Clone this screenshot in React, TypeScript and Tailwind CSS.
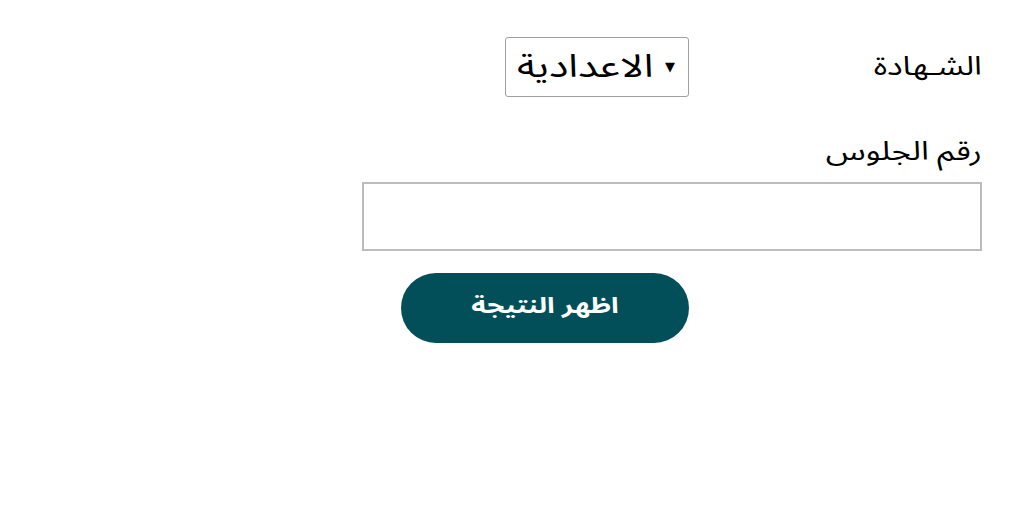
import React, { useState } from 'react';

const options = ['الاعدادية', 'الثانوية'];

export default function App() {
  const [cert, setCert] = useState(options[0]);

  return (
    <div dir="rtl" className="min-h-[517px] w-full bg-white pr-[42px] pt-[37px] font-['Noto_Sans_Arabic','DejaVu_Sans',sans-serif] text-black">
      <form className="w-[620px]" onSubmit={(e) => e.preventDefault()}>
        <div className="flex items-center">
          <label className="w-[293px] text-[26px] leading-none">
            <span className="inline-block origin-right scale-x-[1.26]">الشـهادة</span>
          </label>
          <div className="relative flex h-[60px] w-[184px] items-center rounded-[3px] border border-[#a0a0a0] bg-white">
            <span className="pointer-events-none mr-[13px] text-[13px] leading-none">▼</span>
            <span className="pointer-events-none mr-[12px] inline-block origin-right scale-x-[1.27] text-[32px] leading-none">{cert}</span>
            <select
              value={cert}
              onChange={(e) => setCert(e.target.value)}
              className="absolute inset-0 h-full w-full cursor-pointer appearance-none opacity-0"
            >
              {options.map((o) => (
                <option key={o}>{o}</option>
              ))}
            </select>
          </div>
        </div>
        <label className="mt-[38px] block text-[26px] leading-[34px]">
          <span className="inline-block origin-right scale-x-[1.27]">رقم الجلوس</span>
        </label>
        <input type="text" className="mt-[13px] block h-[69px] w-[620px] border-2 border-[#bdbdbd] bg-white px-3 text-[22px] outline-none" />
        <button type="submit" className="mt-[22px] mr-[293px] flex h-[70px] w-[288px] items-center justify-center rounded-full bg-[#024f59] pb-[4px] text-[22px] font-bold text-white">
          <span className="inline-block scale-x-[1.27]">اظهر النتيجة</span>
        </button>
      </form>
    </div>
  );
}
